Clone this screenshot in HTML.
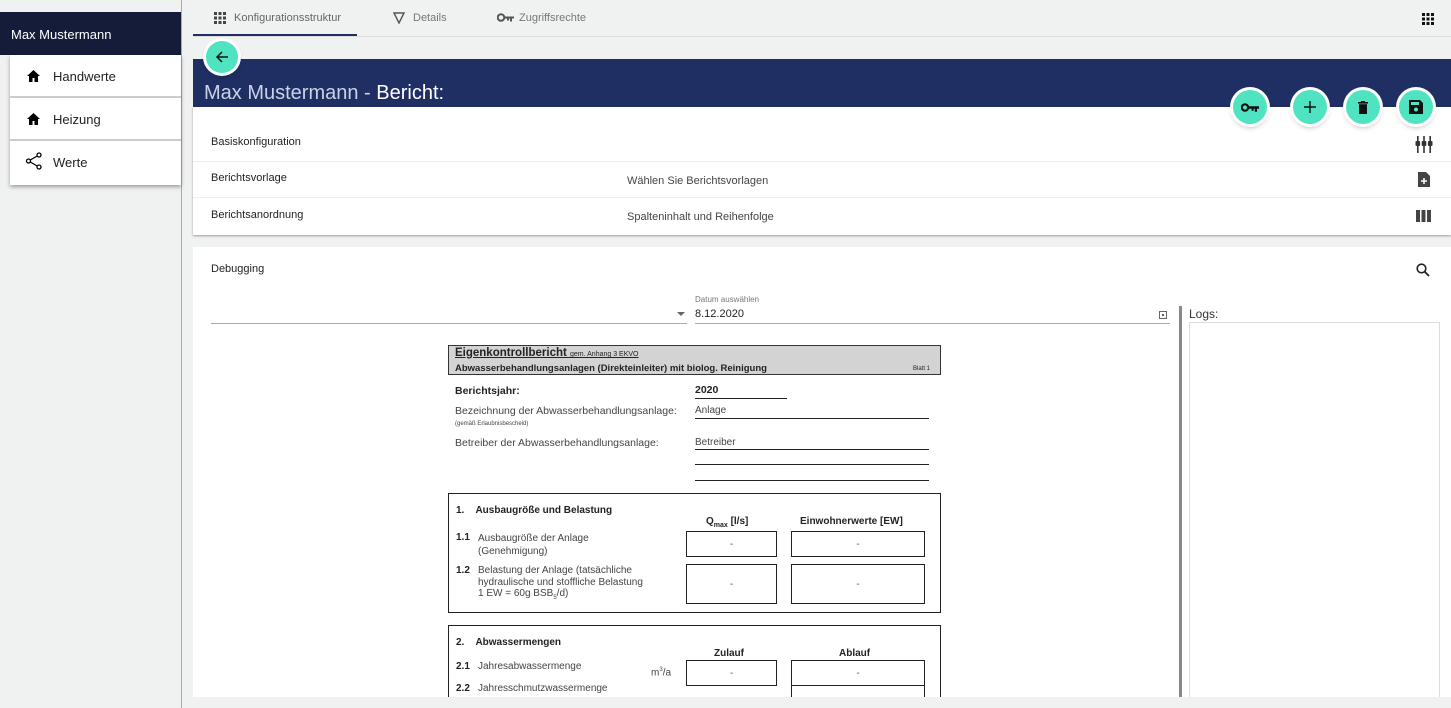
<!DOCTYPE html>
<html><head><meta charset="utf-8"><style>
*{box-sizing:border-box;margin:0;padding:0}
html{overflow:hidden;width:1451px;height:708px}
body{width:1451px;height:708px;overflow:hidden;background:#f0f1f1;font-family:"Liberation Sans",sans-serif;position:relative;color:#222}
.a{position:absolute}
.doc{font-family:"Liberation Sans",sans-serif;color:#222}
.fab{position:absolute;width:34px;height:34px;border-radius:50%;background:#4fe3c1;box-shadow:0 0 0 3px #fff,0 3px 6px rgba(0,0,0,.3);display:flex;align-items:center;justify-content:center}
.box{position:absolute;border:1.5px solid #222;font-size:10px;display:flex;align-items:center;justify-content:center;color:#555}
</style></head><body>
<!-- sidebar -->
<div class="a" style="left:181px;top:0;width:1px;height:708px;background:#aaa"></div>
<div class="a" style="left:0;top:12px;width:181px;height:43px;background:#141c3a;color:#fff;font-size:13px;padding:15px 0 0 11px">Max Mustermann</div>
<div class="a" style="left:10px;top:55px;width:171px;height:130px;background:#fff;box-shadow:0 2px 4px rgba(0,0,0,.35)">
 <div style="height:43px;border-bottom:2px solid #ccc;font-size:13px;padding:14px 0 0 43px;position:relative"><svg class="a" style="left:17px;top:15px" width="13" height="12" viewBox="0 0 13 12"><path d="M6.5 0L0 6h2v6h3.5V8h2v4H11V6h2z" fill="#000"/></svg>Handwerte</div>
 <div style="height:43px;border-bottom:2px solid #ccc;font-size:13px;padding:14px 0 0 43px;position:relative"><svg class="a" style="left:17px;top:15px" width="13" height="12" viewBox="0 0 13 12"><path d="M6.5 0L0 6h2v6h3.5V8h2v4H11V6h2z" fill="#000"/></svg>Heizung</div>
 <div style="height:43px;font-size:13px;padding:14px 0 0 43px;position:relative"><svg class="a" style="left:15px;top:11px" width="18" height="18" viewBox="0 0 18 18" fill="none" stroke="#000" stroke-width="1.3"><circle cx="3.5" cy="9" r="2"/><circle cx="14" cy="3" r="2"/><circle cx="14" cy="15" r="2"/><path d="M5.3 8L12.2 4M5.3 10L12.2 14"/></svg>Werte</div>
</div>
<!-- tabs -->
<div class="a" style="left:193px;top:36px;width:1258px;height:1px;background:#ddd"></div>
<div class="a" style="left:193px;top:34px;width:164px;height:2px;background:#1f2f63"></div>
<svg class="a" style="left:214px;top:12px" width="12" height="12" viewBox="0 0 12 12" fill="#444"><rect x="0" y="0" width="3" height="3"/><rect x="4.5" y="0" width="3" height="3"/><rect x="9" y="0" width="3" height="3"/><rect x="0" y="4.5" width="3" height="3"/><rect x="4.5" y="4.5" width="3" height="3"/><rect x="9" y="4.5" width="3" height="3"/><rect x="0" y="9" width="3" height="3"/><rect x="4.5" y="9" width="3" height="3"/><rect x="9" y="9" width="3" height="3"/></svg>
<div class="a" style="left:234px;top:12px;font-size:11px;color:#666">Konfigurationsstruktur</div>
<svg class="a" style="left:393px;top:12px" width="12" height="12" viewBox="0 0 12 12"><path d="M1 1h10L6 11z" fill="none" stroke="#555" stroke-width="1.4"/></svg>
<div class="a" style="left:413px;top:12px;font-size:11px;color:#777">Details</div>
<svg class="a" style="left:497px;top:13px" width="18" height="9" viewBox="0 0 18 9"><circle cx="4" cy="4.5" r="3.3" fill="none" stroke="#555" stroke-width="2"/><path d="M7 3.5h10v2h-2v3h-2v-3h-1v2h-2v-2H7z" fill="#555"/></svg>
<div class="a" style="left:519px;top:12px;font-size:11px;color:#777">Zugriffsrechte</div>
<svg class="a" style="left:1422px;top:13px" width="12" height="12" viewBox="0 0 12 12" fill="#111"><rect x="0" y="0" width="3" height="3"/><rect x="4.5" y="0" width="3" height="3"/><rect x="9" y="0" width="3" height="3"/><rect x="0" y="4.5" width="3" height="3"/><rect x="4.5" y="4.5" width="3" height="3"/><rect x="9" y="4.5" width="3" height="3"/><rect x="0" y="9" width="3" height="3"/><rect x="4.5" y="9" width="3" height="3"/><rect x="9" y="9" width="3" height="3"/></svg>
<!-- blue header -->
<div class="a" style="left:193px;top:59px;width:1258px;height:48px;background:#1f2f63"></div>
<div class="a" style="left:204px;top:82px;font-size:20px;color:#c9d2e6">Max Mustermann - <span style="color:#fff">Bericht:</span></div>
<div class="fab" style="left:206px;top:41px;width:32px;height:32px"><svg width="14" height="14" viewBox="0 0 14 14"><path d="M13 7H2M7 2L2 7l5 5" fill="none" stroke="#111" stroke-width="1.5"/></svg></div>
<!-- card 1 -->
<div class="a" style="left:193px;top:107px;width:1258px;height:128px;background:#fff;box-shadow:0 1px 2px rgba(0,0,0,.35)"></div>
<div class="a" style="left:211px;top:136px;font-size:11px">Basiskonfiguration</div>
<div class="a" style="left:193px;top:161px;width:1258px;height:1px;background:#eee"></div>
<div class="a" style="left:211px;top:172px;font-size:11px">Berichtsvorlage</div>
<div class="a" style="left:627px;top:175px;font-size:11px;color:#444">Wählen Sie Berichtsvorlagen</div>
<div class="a" style="left:193px;top:197px;width:1258px;height:1px;background:#eee"></div>
<div class="a" style="left:211px;top:209px;font-size:11px">Berichtsanordnung</div>
<div class="a" style="left:627px;top:211px;font-size:11px;color:#444">Spalteninhalt und Reihenfolge</div>
<svg class="a" style="left:1415px;top:136px" width="18" height="17" viewBox="0 0 18 17" fill="#333"><rect x="2" y="0" width="1.6" height="17"/><rect x="8.2" y="0" width="1.6" height="17"/><rect x="14.4" y="0" width="1.6" height="17"/><rect x="0.5" y="5" width="4.6" height="5" rx="1"/><rect x="6.7" y="5" width="4.6" height="5" rx="1"/><rect x="12.9" y="5" width="4.6" height="5" rx="1"/></svg>
<svg class="a" style="left:1418px;top:172px" width="12" height="15" viewBox="0 0 12 15"><path d="M0 0h8l4 4v11H0z" fill="#444"/><path d="M6 6v6M3 9h6" stroke="#fff" stroke-width="1.6"/></svg>
<svg class="a" style="left:1416px;top:210px" width="15" height="12" viewBox="0 0 15 12" fill="#444"><rect x="0" y="0" width="4" height="12"/><rect x="5.5" y="0" width="4" height="12"/><rect x="11" y="0" width="4" height="12"/></svg>
<!-- fabs -->
<div class="fab" style="left:1233px;top:90px"><svg width="18" height="9" viewBox="0 0 18 9"><circle cx="4" cy="4.5" r="3.2" fill="none" stroke="#111" stroke-width="2.2"/><path d="M7 3.3h11v2.4h-2v3h-2.2v-3h-1.2v2h-2v-2H7z" fill="#111"/></svg></div>
<div class="fab" style="left:1293px;top:90px"><svg width="12" height="12" viewBox="0 0 12 12"><path d="M6 0v12M0 6h12" stroke="#111" stroke-width="1.4"/></svg></div>
<div class="fab" style="left:1346px;top:90px"><svg width="10" height="13" viewBox="0 0 10 13" fill="#111"><rect x="0" y="1" width="10" height="1.6"/><rect x="3" y="0" width="4" height="1.5"/><path d="M1 3.2h8V13H1z"/></svg></div>
<div class="fab" style="left:1399px;top:90px"><svg width="14" height="14" viewBox="0 0 14 14"><path d="M0 0h11l3 3v11H0z" fill="#111"/><rect x="2" y="2" width="8" height="3" fill="#4fe3c1"/><circle cx="7" cy="9.5" r="2" fill="#4fe3c1"/></svg></div>
<!-- card 2 -->
<div class="a" style="left:193px;top:247px;width:1258px;height:450px;background:#fff"></div>
<div class="a" style="left:211px;top:263px;font-size:11px">Debugging</div>
<svg class="a" style="left:1416px;top:263px" width="14" height="14" viewBox="0 0 14 14"><circle cx="5.5" cy="5.5" r="4.3" fill="none" stroke="#222" stroke-width="1.6"/><path d="M8.6 8.6L13 13" stroke="#222" stroke-width="1.8"/></svg>
<div class="a" style="left:211px;top:323px;width:476px;height:1px;background:#aaa"></div>
<div class="a" style="left:677px;top:312px;width:0;height:0;border-left:4px solid transparent;border-right:4px solid transparent;border-top:4px solid #666"></div>
<div class="a" style="left:695px;top:295px;font-size:8px;color:#777">Datum auswählen</div>
<div class="a" style="left:695px;top:308px;font-size:11px">8.12.2020</div>
<div class="a" style="left:695px;top:323px;width:475px;height:1px;background:#aaa"></div>
<svg class="a" style="left:1159px;top:310px" width="8" height="9" viewBox="0 0 8 9"><rect x="0.5" y="1.5" width="7" height="7" fill="none" stroke="#666"/><rect x="3" y="4" width="2" height="2" fill="#666"/></svg>
<div class="a" style="left:1179px;top:306px;width:3px;height:391px;background:#888"></div>
<div class="a" style="left:1189px;top:307px;font-size:12px;color:#333">Logs:</div>
<div class="a" style="left:1189px;top:322px;width:251px;height:380px;border:1px solid #ddd"></div>
<!-- document -->
<div class="doc">
<div class="a" style="left:448px;top:345px;width:493px;height:30px;background:#d3d3d3;border:1px solid #333"></div>
<div class="a" style="left:455px;top:347px;font-size:11.5px;font-weight:bold;text-decoration:underline">Eigenkontrollbericht <span style="font-size:7px;font-weight:normal;text-decoration:none">gem. Anhang 3 EKVO</span></div>
<div class="a" style="left:455px;top:363px;font-size:9.5px;font-weight:bold">Abwasserbehandlungsanlagen (Direkteinleiter) mit biolog. Reinigung</div>
<div class="a" style="left:913px;top:366px;font-size:6px">Blatt 1</div>
<div class="a" style="left:455px;top:385px;font-size:10.5px;font-weight:bold">Berichtsjahr:</div>
<div class="a" style="left:695px;top:384px;font-size:10.5px;font-weight:bold">2020</div>
<div class="a" style="left:695px;top:398px;width:92px;height:1px;background:#222"></div>
<div class="a" style="left:455px;top:405px;font-size:10.5px;color:#444">Bezeichnung der Abwasserbehandlungsanlage:</div>
<div class="a" style="left:455px;top:421px;font-size:6px;color:#444">(gemäß Erlaubnisbescheid)</div>
<div class="a" style="left:695px;top:405px;font-size:10px;color:#444">Anlage</div>
<div class="a" style="left:695px;top:418px;width:234px;height:1px;background:#222"></div>
<div class="a" style="left:455px;top:437px;font-size:10.5px;color:#444">Betreiber der Abwasserbehandlungsanlage:</div>
<div class="a" style="left:695px;top:437px;font-size:10px;color:#444">Betreiber</div>
<div class="a" style="left:695px;top:449px;width:234px;height:1px;background:#222"></div>
<div class="a" style="left:695px;top:464px;width:234px;height:1px;background:#222"></div>
<div class="a" style="left:695px;top:480px;width:234px;height:1px;background:#222"></div>
<div class="a" style="left:448px;top:493px;width:493px;height:120px;border:1.5px solid #222"></div>
<div class="a" style="left:456px;top:505px;font-size:10px;font-weight:bold">1.&nbsp;&nbsp;&nbsp;&nbsp;Ausbaugröße und Belastung</div>
<div class="a" style="left:706px;top:516px;font-size:10px;font-weight:bold">Q<sub style="font-size:7px">max</sub> [l/s]</div>
<div class="a" style="left:800px;top:516px;font-size:10px;font-weight:bold">Einwohnerwerte [EW]</div>
<div class="a" style="left:456px;top:532px;font-size:10px;font-weight:bold">1.1</div>
<div class="a" style="left:478px;top:532px;font-size:10px;color:#444;line-height:13px">Ausbaugröße der Anlage<br>(Genehmigung)</div>
<div class="a" style="left:456px;top:565px;font-size:10px;font-weight:bold">1.2</div>
<div class="a" style="left:478px;top:565px;font-size:10px;color:#444;line-height:11.5px">Belastung der Anlage (tatsächliche<br>hydraulische und stoffliche Belastung<br>1 EW = 60g BSB<sub style="font-size:6px">5</sub>/d)</div>
<div class="box" style="left:686px;top:531px;width:91px;height:26px">-</div>
<div class="box" style="left:791px;top:531px;width:134px;height:26px">-</div>
<div class="box" style="left:686px;top:564px;width:91px;height:40px">-</div>
<div class="box" style="left:791px;top:564px;width:134px;height:40px">-</div>
<div class="a" style="left:448px;top:625px;width:493px;height:80px;border:1.5px solid #222"></div>
<div class="a" style="left:456px;top:637px;font-size:10px;font-weight:bold">2.&nbsp;&nbsp;&nbsp;&nbsp;Abwassermengen</div>
<div class="a" style="left:714px;top:648px;font-size:10px;font-weight:bold">Zulauf</div>
<div class="a" style="left:839px;top:648px;font-size:10px;font-weight:bold">Ablauf</div>
<div class="a" style="left:456px;top:661px;font-size:10px;font-weight:bold">2.1</div>
<div class="a" style="left:478px;top:661px;font-size:10px;color:#444">Jahresabwassermenge</div>
<div class="a" style="left:651px;top:667px;font-size:10px;color:#444">m<sup style="font-size:6px">3</sup>/a</div>
<div class="a" style="left:456px;top:683px;font-size:10px;font-weight:bold">2.2</div>
<div class="a" style="left:478px;top:683px;font-size:10px;color:#444">Jahresschmutzwassermenge</div>
<div class="box" style="left:686px;top:660px;width:91px;height:26px">-</div>
<div class="box" style="left:791px;top:660px;width:134px;height:26px">-</div>
<div class="box" style="left:791px;top:685px;width:134px;height:20px"></div>
</div>
<div class="a" style="left:182px;top:697px;width:1269px;height:11px;background:#f0f1f1"></div>
</body></html>
